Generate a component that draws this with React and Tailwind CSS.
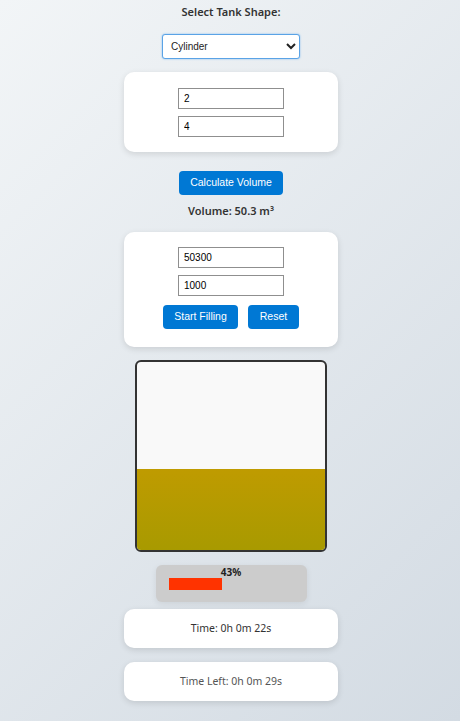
import React, { useState } from "react";

const App = () => {
  const [shape, setShape] = useState("cylinder");
  const [radius, setRadius] = useState("2");
  const [height, setHeight] = useState("4");
  const [capacity, setCapacity] = useState("50300");
  const [rate, setRate] = useState("1000");
  const percent = 43;

  const inputCls =
    "w-[106px] h-[21px] border border-[#8f8f8f] bg-white px-[5px] text-[10px] text-black outline-none font-['Liberation_Sans',Arial,sans-serif]";
  const btnCls =
    "h-[24px] rounded-[4px] bg-[#0078d4] text-white text-[10.5px] font-['Liberation_Sans',Arial,sans-serif]";
  const cardCls = "w-[214px] rounded-[10px] bg-white shadow-[0_2px_6px_rgba(0,0,0,0.12)]";

  return (
    <div className="min-h-screen bg-[linear-gradient(135deg,#f2f5f7_0%,#d3dbe3_100%)] flex flex-col items-center pl-[2px] font-['Noto_Sans','Open_Sans',sans-serif] text-[#333]">
      <h2 className="mt-[4px] text-[11px] leading-[16px] font-semibold text-[#333]">Select Tank Shape:</h2>

      <select
        value={shape}
        onChange={(e) => setShape(e.target.value)}
        className="mt-[14px] w-[138px] h-[25px] rounded-[3px] border border-[#5aa3e6] bg-white pl-[4px] text-[10px] text-[#222] font-['Liberation_Sans',Arial,sans-serif] shadow-[0_0_2px_#7ab8f0]"
      >
        <option value="cylinder">Cylinder</option>
        <option value="cube">Cube</option>
        <option value="sphere">Sphere</option>
      </select>

      {/* dimensions */}
      <div className={cardCls + " mt-[13px] h-[80px] flex flex-col items-center pt-[16px] gap-[7px]"}>
        <input className={inputCls} value={radius} onChange={(e) => setRadius(e.target.value)} />
        <input className={inputCls} value={height} onChange={(e) => setHeight(e.target.value)} />
      </div>

      <button className={btnCls + " mt-[19px] w-[104px]"}>Calculate Volume</button>

      <p className="mt-[8px] text-[11px] leading-[16px] font-semibold text-[#333]">Volume: 50.3 m³</p>

      {/* filling */}
      <div className={cardCls + " mt-[13px] h-[115px] flex flex-col items-center pt-[15px]"}>
        <input className={inputCls} value={capacity} onChange={(e) => setCapacity(e.target.value)} />
        <input className={inputCls + " mt-[7px]"} value={rate} onChange={(e) => setRate(e.target.value)} />
        <div className="mt-[9px] flex gap-[10px]">
          <button className={btnCls + " w-[75px]"}>Start Filling</button>
          <button className={btnCls + " w-[51px]"}>Reset</button>
        </div>
      </div>

      {/* tank */}
      <div className="mt-[13px] w-[192px] h-[192px] rounded-[6px] border-2 border-[#333] bg-[#f9f9f9] overflow-hidden flex flex-col justify-end">
        <div
          className="w-full bg-[linear-gradient(180deg,#bf9b00,#a89a00)]"
          style={{ height: `${percent}%` }}
        />
      </div>

      {/* progress */}
      <div className="mt-[13px] w-[151px] h-[37px] rounded-[6px] bg-[#cccccc] shadow-[0_2px_6px_rgba(0,0,0,0.08)] px-[13px] pt-[1px]">
        <p className="text-center text-[10px] leading-[12px] font-bold text-[#222]">{percent}%</p>
        <div className="w-full h-[12px]">
          <div className="h-full bg-[#ff3300]" style={{ width: `${percent}%` }} />
        </div>
      </div>

      <div className={cardCls + " mt-[7px] h-[39px] flex items-center justify-center text-[10.5px] text-[#333]"}>
        Time: 0h 0m 22s
      </div>

      <div className={cardCls + " mt-[14px] h-[39px] flex items-center justify-center text-[10.5px] text-[#555]"}>
        Time Left: 0h 0m 29s
      </div>
      <div className="h-[20px]" />
    </div>
  );
};

export default App;
